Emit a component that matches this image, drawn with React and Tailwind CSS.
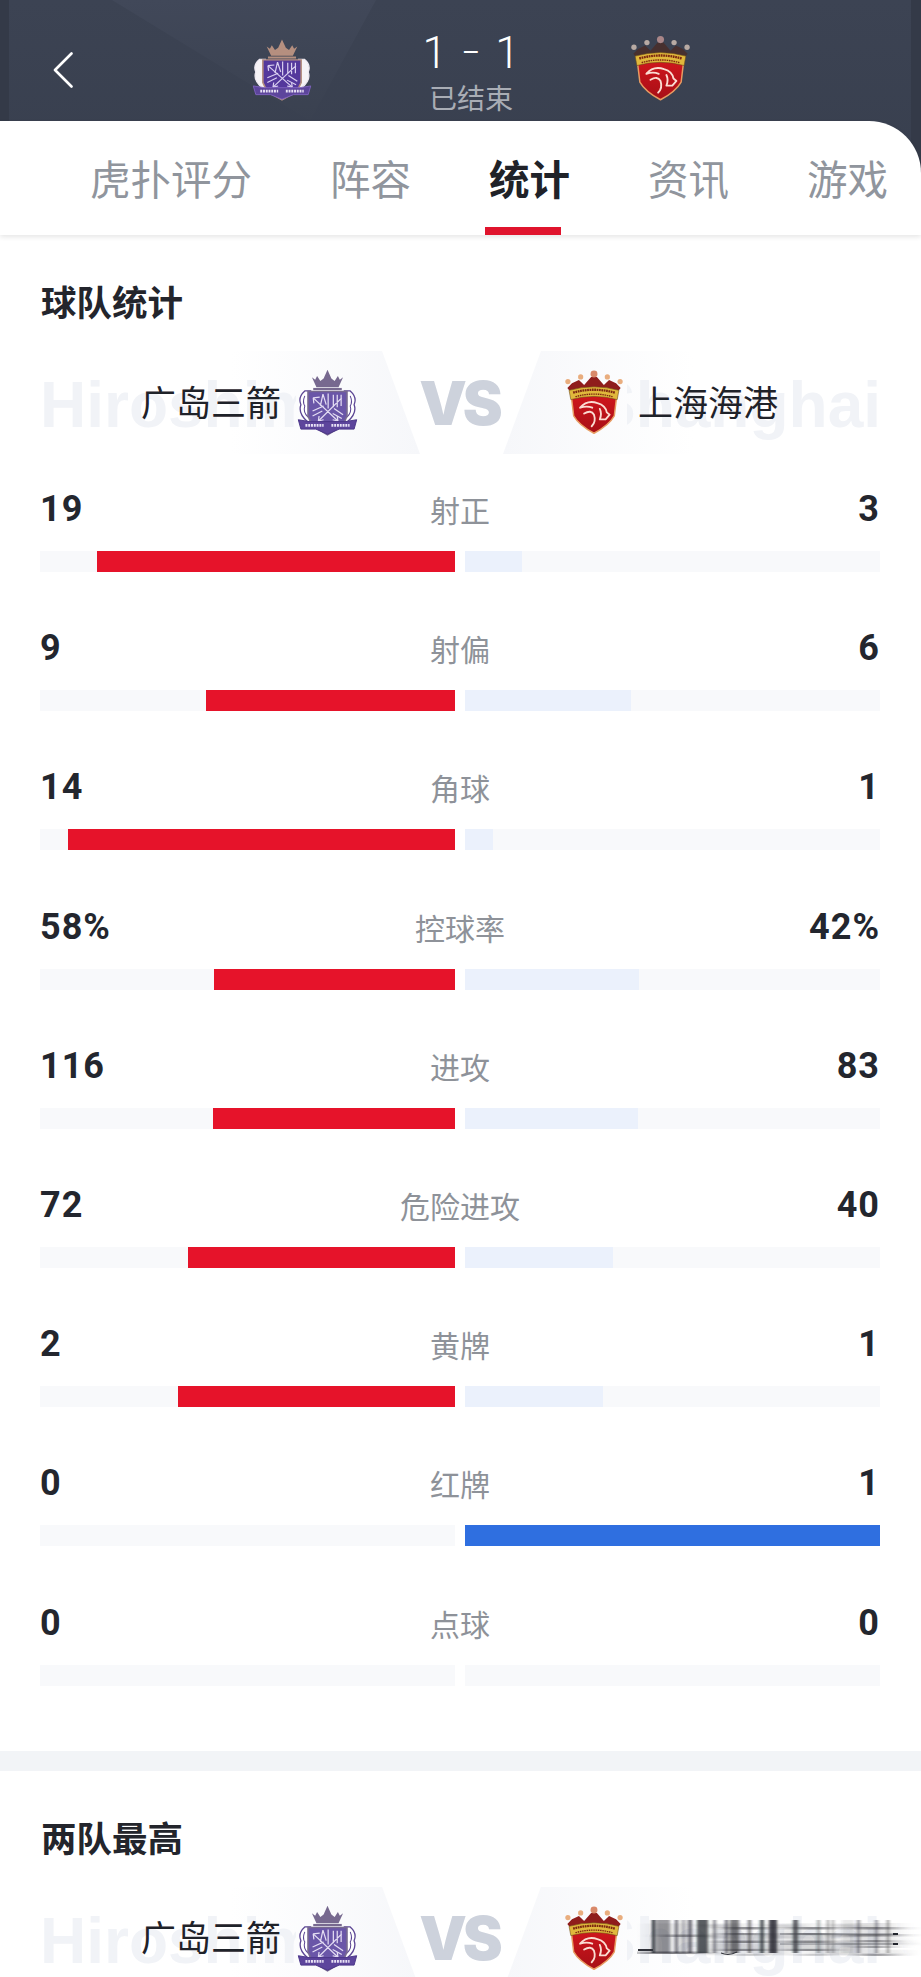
const CJK = "font-['Noto_Sans_CJK_SC','Noto_Sans',sans-serif]";

function HiroshimaLogo({ dark, className }) {
  const crown = dark ? "#b58f7f" : "#77698f";
  const wing = dark ? "#f6f3f6" : "#ffffff";
  const wingStroke = dark ? "#efeaf2" : "#5c4694";
  const shield = dark ? "#54389c" : "#6a56a8";
  const line = dark ? "#d9cff0" : "#e4ddf3";
  return (
    <svg viewBox="3 1 94 107" preserveAspectRatio="none" className={className}>
      <path d="M33 30 L26 14 L31 18 L34 12 L39 20 L44 16 L50 2 L56 16 L61 20 L66 12 L69 18 L74 14 L67 30 Z" fill={crown} />
      <path d="M28 33 H72" stroke={crown} strokeWidth="3.5" />
      <path d="M15 36 Q4 46 9 58 Q4 72 20 86 L24 84 L24 36 Z" fill={wing} stroke={wingStroke} strokeWidth="2" />
      <path d="M85 36 Q96 46 91 58 Q96 72 80 86 L76 84 L76 36 Z" fill={wing} stroke={wingStroke} strokeWidth="2" />
      {!dark && <path d="M15 44 Q11 54 15 60 Q12 70 20 78 M85 44 Q89 54 85 60 Q88 70 80 78" fill="none" stroke="#5c4694" strokeWidth="1.6" />}
      <path d="M20 37 H80 V76 Q76 92 50 106 Q24 92 20 76 Z" fill={shield} stroke={crown} strokeWidth="2.5" />
      <path d="M28 47 L66 84 M72 47 L36 84 M51 40 V64 M59 42 V62 M65 42 V62 M71 42 V60 M43 41 L39 60 M43 41 L48 58 M27 68 L44 60 M27 76 L42 68 M60 64 L74 74 M58 72 L72 80" fill="none" stroke={line} strokeWidth="1.9" />
      <path d="M28 47 L38 46 M28 47 L29 56 M66 84 L58 82 M66 84 L65 76 M36 84 L44 82 M36 84 L37 76" fill="none" stroke={line} strokeWidth="1.9" />
      <path d="M5 82 L22 85 H78 L95 82 L91 97 H68 L50 105 L32 97 H9 Z" fill="#5d459c" stroke={dark ? "#7f63bf" : "#4a3688"} strokeWidth="1.5" />
      <path d="M16 91 H44 M56 91 H84" stroke="#e8e2f5" strokeWidth="4.5" strokeDasharray="3 1.3" />
    </svg>
  );
}

function ShanghaiLogo({ dark, className }) {
  const crown = dark ? "#47302f" : "#8f1d1c";
  const ball = dark ? "#b8aaa3" : "#e9ad7e";
  const id = dark ? "shieldDark" : "shieldLight";
  return (
    <svg viewBox="0 0 100 110" className={className}>
      <defs>
        <linearGradient id={id} x1="0" y1="0" x2="0" y2="1">
          <stop offset="0" stopColor="#d0161d" />
          <stop offset="1" stopColor="#a70f16" />
        </linearGradient>
      </defs>
      <path d="M4 30 L12 22 L24 16 L33 25 L45 11 H55 L67 25 L76 16 L88 22 L96 30 L88 40 H12 Z" fill={crown} />
      <circle cx="5" cy="19" r="4.5" fill={ball} />
      <circle cx="27" cy="11" r="4.5" fill={ball} />
      <circle cx="50" cy="6" r="6" fill={dark ? "#a98688" : "#d9896a"} />
      <circle cx="73" cy="11" r="4.5" fill={ball} />
      <circle cx="95" cy="19" r="4.5" fill={ball} />
      <path d="M11 45 Q50 36 89 45 L85 78 Q76 94 50 108 Q24 94 15 78 Z" fill={`url(#${id})`} stroke="#e89c62" strokeWidth="2.5" />
      <path d="M7 34 Q50 22 93 34 L90 50 Q50 39 10 50 Z" fill="#e0b83c" stroke="#6d4d18" strokeWidth="1" />
      <path d="M14 38 Q50 28 86 38" fill="none" stroke="#7c2710" strokeWidth="4" strokeDasharray="3 1.1" />
      <path d="M18 45 Q50 36 82 45" fill="none" stroke="#7c2710" strokeWidth="2.4" strokeDasharray="2.6 1.3" />
      <path d="M26 64 Q38 50 56 56 Q70 60 72 72 L77 76 L70 84 L62 84 M26 64 Q38 60 47 64 M33 74 Q45 67 50 76 Q54 88 46 96 M60 66 Q64 74 60 84" fill="none" stroke="#fbdcd2" strokeWidth="3.2" strokeLinecap="round" strokeLinejoin="round" />
    </svg>
  );
}

const stats = [
  ["19", "射正", "3"],
  ["9", "射偏", "6"],
  ["14", "角球", "1"],
  ["58%", "控球率", "42%"],
  ["116", "进攻", "83"],
  ["72", "危险进攻", "40"],
  ["2", "黄牌", "1"],
  ["0", "红牌", "1"],
  ["0", "点球", "0"],
];

function StatRow({ left, label, right }) {
  const l = parseFloat(left);
  const r = parseFloat(right);
  const total = l + r;
  const lp = total ? (l / total) * 100 : 0;
  const rp = total ? (r / total) * 100 : 0;
  const leftWins = l >= r;
  return (
    <div className="h-[139.2px] pt-[35px] pr-[41px] pl-[40px]">
      <div className="grid h-[40px] grid-cols-[1fr_auto_1fr] items-center">
        <span className="font-['Roboto',sans-serif] text-[36px] leading-[40px] font-bold tracking-[1px] text-[#23262e]">{left}</span>
        <span className={`${CJK} text-[30px] leading-[40px] text-[#8e9299]`}>{label}</span>
        <span className="text-right font-['Roboto',sans-serif] text-[36px] leading-[40px] font-bold tracking-[1px] text-[#23262e]">{right}</span>
      </div>
      <div className="mt-[22px] flex h-[21px] gap-[10px]">
        <div className="flex flex-1 justify-end bg-[#f8f9fb]">
          <div className={leftWins ? "bg-[#e6132a]" : "bg-[#fbe7ea]"} style={{ width: `${lp}%` }} />
        </div>
        <div className="flex flex-1 justify-start bg-[#f8f9fb]">
          <div className={leftWins ? "bg-[#ebf1fc]" : "bg-[#2f6fe0]"} style={{ width: `${rp}%` }} />
        </div>
      </div>
    </div>
  );
}

function SmearedName() {
  const streaks = [
    [15, 3, 1], [19, 14, 0.45], [38, 3, 0.65], [44, 5, 0.3], [51, 4, 0.65], [60, 11, 0.75], [76, 3, 0.5],
    [88, 3, 0.65], [93, 9, 0.6], [111, 3, 0.6], [123, 4, 0.75], [132, 8, 0.85], [156, 5, 0.7],
    [180, 3, 0.35], [190, 2, 0.45], [195, 2, 0.4], [205, 12, 0.1], [220, 3, 0.45], [238, 3, 0.4], [250, 2, 0.5],
  ];
  return (
    <div className="relative ml-[14px] h-[40px] w-[264px]">
      <svg width="0" height="0" className="absolute">
        <filter id="smear" x="-30%" y="-10%" width="160%" height="120%">
          <feGaussianBlur stdDeviation="7 0.6" />
        </filter>
      </svg>
      <span className={`${CJK} block origin-left scale-x-[1.87] text-[35px] leading-[40px] whitespace-nowrap text-[#2a2c33] opacity-60 [filter:url(#smear)] [mask-image:linear-gradient(to_right,black_55%,rgba(0,0,0,0.3))]`}>
        上海海港
      </span>
      <svg viewBox="0 0 264 40" className="absolute top-0 left-0 h-[40px] w-[264px]">
        <defs>
          <filter id="soft" x="-100%" y="-5%" width="300%" height="110%">
            <feGaussianBlur stdDeviation="1.4 0.3" />
          </filter>
        </defs>
        <g filter="url(#soft)">
          {streaks.map(([x, w, o]) => (
            <rect key={x} x={x} y="2" width={w} height="33" fill="#23262e" opacity={o} />
          ))}
        </g>
        <rect x="1" y="31" width="15" height="2" fill="#30323a" />
        <path d="M84 35 Q92 38 100 34" fill="none" stroke="#30323a" strokeWidth="1.2" />
        <path d="M143 16 H261 M143 26 H261" stroke="#55585f" strokeWidth="1.6" opacity="0.45" />
        <path d="M256 16 H261 M256 26 H261" stroke="#23262e" strokeWidth="2" />
      </svg>
    </div>
  );
}

function TeamsRow({ smeared }) {
  return (
    <div className="relative h-[103px] overflow-hidden">
      <div className="absolute inset-y-0 left-[230px] w-[190px] bg-gradient-to-r from-white to-[#f6f7fa] [clip-path:polygon(0_0,80%_0,100%_100%,0_100%)]" />
      <div className="absolute inset-y-0 left-[503px] w-[190px] bg-gradient-to-l from-white to-[#f6f7fa] [clip-path:polygon(20%_0,100%_0,100%_100%,0_100%)]" />
      <div className="absolute top-[14px] left-[40px] h-[80px] w-[256px] overflow-hidden font-['Liberation_Sans',sans-serif] text-[64px] leading-[80px] font-bold whitespace-nowrap text-[#f1f3f7]">
        Hiroshima
      </div>
      <div className="absolute top-[14px] right-[40px] flex h-[80px] w-[254px] justify-end overflow-hidden font-['Liberation_Sans',sans-serif] text-[64px] leading-[80px] font-bold whitespace-nowrap text-[#f1f3f7]">
        Shanghai
      </div>
      <div className="relative flex h-full items-center">
        <div className={`${CJK} relative top-[-2px] ml-[141px] w-[141px] text-[35px] leading-[40px] whitespace-nowrap text-[#1f2229]`}>广岛三箭</div>
        <HiroshimaLogo className="ml-[15px] h-[67px] w-[61px]" />
        <div className="ml-[59px] w-[84px] text-center font-['Inter',sans-serif] text-[60px] leading-[60px] font-black tracking-[-4px] text-[#cdd2dc]">VS</div>
        <ShanghaiLogo className="ml-[64px] h-[67px] w-[58px]" />
        {smeared ? (
          <SmearedName />
        ) : (
          <div className={`${CJK} relative top-[-2px] ml-[15px] text-[35px] leading-[40px] whitespace-nowrap text-[#1f2229]`}>上海海港</div>
        )}
      </div>
    </div>
  );
}

function SectionTitle({ children }) {
  return (
    <div className={`${CJK} px-[41px] pt-[42px] pb-[26px] text-[35.5px] leading-[48px] font-bold text-[#23252c]`}>{children}</div>
  );
}

const tabs = ["虎扑评分", "阵容", "统计", "资讯", "游戏"];

export default function App() {
  return (
    <div className="relative h-[1977px] w-[921px] overflow-hidden bg-white">
      <div className="relative bg-gradient-to-b from-[#3c4353] to-[#373e4d]">
        <div className="absolute inset-y-0 left-0 w-[9px] bg-[#343a48]" />
        <div className="absolute inset-y-0 right-0 w-[10px] bg-[#343a48]" />
        <div className="absolute top-0 left-[112px] h-[121px] w-[264px] bg-gradient-to-b from-[#414859] to-[#3a4150] [clip-path:polygon(0_0,100%_0,75%_100%)]" />
        <div className="relative flex h-[121px] items-start pl-[53px]">
          <svg viewBox="0 0 20 36" className="mt-[52px] h-[36px] w-[20px]">
            <path d="M18.5 1.5 L2 18 L18.5 34.5" fill="none" stroke="#ffffff" strokeWidth="2.6" strokeLinecap="round" strokeLinejoin="round" />
          </svg>
          <HiroshimaLogo dark className="mt-[39px] ml-[179px] h-[62px] w-[60px]" />
          <div className="mt-[30px] ml-[99px] flex w-[120px] flex-col items-center">
            <div className="flex h-[46px] items-center gap-[15px] font-['Roboto',sans-serif] text-[44px] leading-[46px] font-light text-white">
              <span>1</span>
              <span className="text-[28px] font-normal">–</span>
              <span>1</span>
            </div>
            <div className={`${CJK} mt-[1px] text-[28px] leading-[40px] text-[#a9adb5]`}>已结束</div>
          </div>
          <ShanghaiLogo dark className="mt-[36px] ml-[100px] h-[65px] w-[59px]" />
        </div>
        <div className="relative z-10 flex h-[114px] items-center gap-[78px] rounded-tr-[52px] bg-white pl-[90px] shadow-[0_2px_5px_rgba(0,0,0,0.10)]">
          {tabs.map((t, i) => (
            <div
              key={t}
              className={`${CJK} relative text-[40.5px] leading-[114px] whitespace-nowrap ${i === 2 ? "font-bold text-[#202228]" : "text-[#90959d]"}`}
            >
              <span className="relative top-[0px]">{t}</span>
              {i === 2 && <div className="absolute bottom-0 left-[-4px] h-[8px] w-[76px] bg-[#e0142d]" />}
            </div>
          ))}
        </div>
      </div>

      <SectionTitle>球队统计</SectionTitle>
      <TeamsRow />
      {stats.map(([l, label, r]) => (
        <StatRow key={label} left={l} label={label} right={r} />
      ))}
      <div className="mt-[44px] h-[20px] bg-[#f2f4f7]" />
      <SectionTitle>两队最高</SectionTitle>
      <TeamsRow smeared />
    </div>
  );
}
